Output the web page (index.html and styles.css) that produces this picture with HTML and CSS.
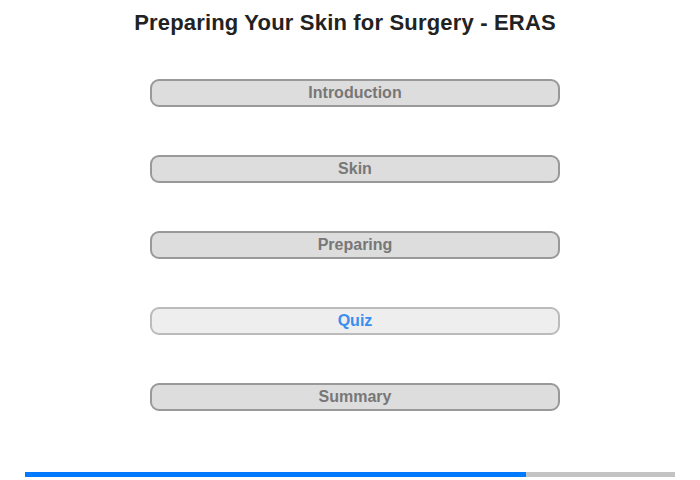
FILE: index.html
```html
<!DOCTYPE html>
<html lang="en">
<head>
    <meta charset="UTF-8">
    <title>Preparing Your Skin for Surgery - ERAS</title>
    <link rel="stylesheet" href="styles.css">
</head>
<body>
    <div class="page">
        <h1>Preparing Your Skin for Surgery - ERAS</h1>

        <!-- section menu -->
        <nav class="menu">
            <a class="menu-item" href="#">Introduction</a>
            <a class="menu-item" href="#">Skin</a>
            <a class="menu-item" href="#">Preparing</a>
            <a class="menu-item current" href="#">Quiz</a>
            <a class="menu-item" href="#">Summary</a>
        </nav>

        <div class="progress">
            <div class="progress-fill" style="width: 77.1%"></div>
        </div>
    </div>
</body>
</html>
```

FILE: styles.css
```css
/* base */
body {
    font-family: "Liberation Sans", Arial, sans-serif;
    margin: 0;
    background-color: #fff;
}

.page {
    width: 700px;
    height: 480px;
    display: flex;
    flex-direction: column;
}

h1 {
    margin: 0;
    padding: 10px 10px 0 0;
    height: 34px;
    font-size: 22px;
    letter-spacing: 0.18px;
    line-height: 26px;
    font-weight: bold;
    text-align: center;
    color: #222;
}

.menu {
    display: flex;
    flex-direction: column;
    gap: 48px;
    width: 410px;
    margin: 35px 0 0 150px;
}

.menu-item {
    display: block;
    height: 28px;
    box-sizing: border-box;
    border: 2px solid #999;
    border-radius: 9px;
    background-color: #ddd;
    color: #777;
    font-size: 16px;
    font-weight: bold;
    line-height: 24px;
    text-align: center;
    text-decoration: none;
}

.menu-item.current {
    background-color: #eee;
    border-color: #bbb;
    color: #3a8ef0;
}

.progress {
    width: 650px;
    height: 5px;
    margin: 61px 0 0 25px;
    background-color: #c3c3c3;
}

.progress-fill {
    height: 100%;
    background-color: #007bff;
}
```
